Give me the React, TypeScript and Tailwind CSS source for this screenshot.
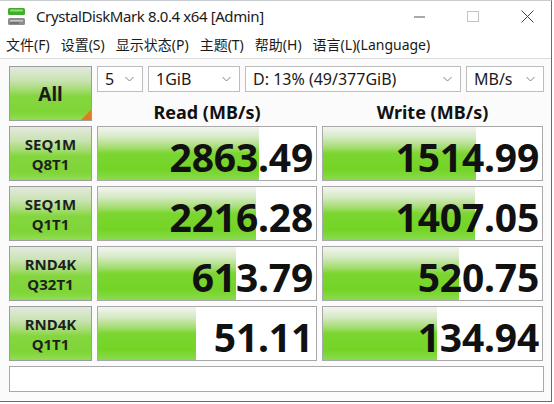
import React from "react";

const FONT = { fontFamily: '"Noto Sans", "Noto Sans CJK SC", sans-serif' };

const rows = [
  { l1: "SEQ1M", l2: "Q8T1", r: "2863.49", w: "1514.99", rb: 161, wb: 153 },
  { l1: "SEQ1M", l2: "Q1T1", r: "2216.28", w: "1407.05", rb: 158, wb: 152 },
  { l1: "RND4K", l2: "Q32T1", r: "613.79", w: "520.75", rb: 138, wb: 136 },
  { l1: "RND4K", l2: "Q1T1", r: "51.11", w: "134.94", rb: 98, wb: 114 },
];

function Chevron() {
  return (
    <svg width="9" height="6" viewBox="0 0 9 6" className="shrink-0">
      <path d="M0.5 1 L4.5 5 L8.5 1" fill="none" stroke="#808080" strokeWidth="1" />
    </svg>
  );
}

function Select({ w, text }: { w: string; text: string }) {
  return (
    <div className={`${w} h-[26px] bg-white border border-[#bdbdbd] flex items-center justify-between pl-[7px] pr-[8px] text-[16px] text-[#1a1a1a] leading-none`}>
      <span>{text}</span>
      <Chevron />
    </div>
  );
}

function Result({ value, bar }: { value: string; bar: number }) {
  return (
    <div className="relative flex-1 h-full bg-white border border-[#a8a8a8] flex items-center justify-end pr-[3px] pt-[5px] overflow-hidden">
      <div
        className="absolute left-0 top-0 bottom-0 bg-[linear-gradient(to_bottom,#f2f4f0_0%,#d8ebc8_18%,#a6dd74_38%,#7bd630_50%,#74d426_80%,#8adb4e_100%)]"
        style={{ width: bar }}
      />
      <span className="relative text-[39px] font-bold text-[#111] leading-none tracking-[-0.2px]">{value}</span>
    </div>
  );
}

export default function App() {
  return (
    <div className="w-[554px] h-[404px] bg-white overflow-hidden" style={FONT}>
      <div className="w-[552px] h-[402px] border-r border-b border-t border-[#5f6f78] border-t-[#c8ccd0] bg-white flex flex-col">
        {/* Title bar */}
        <div className="h-[31px] flex items-center shrink-0">
          <div className="w-[36px] pl-[8px] flex items-center">
            <svg width="18" height="18" viewBox="0 0 18 18">
              <rect x="0" y="0" width="17" height="7" rx="1.5" fill="#3fae2a" />
              <rect x="2" y="1.5" width="13" height="2" rx="1" fill="#8ee07a" />
              <rect x="0" y="10" width="17" height="7" rx="1.5" fill="#8c8c8c" />
              <rect x="2" y="12" width="13" height="1.5" fill="#c9c9c9" />
              <rect x="2" y="14.5" width="9" height="1" fill="#5a5a5a" />
            </svg>
          </div>
          <span className="text-[15px] text-[#1a1a1a] leading-none tracking-[-0.4px]">CrystalDiskMark 8.0.4 x64 [Admin]</span>
          <div className="flex-1" />
          <div className="flex items-center gap-[42px] pr-[17px]">
            <svg width="11" height="2" viewBox="0 0 11 2"><rect x="0" y="0.5" width="11" height="1" fill="#555" /></svg>
            <svg width="12" height="11" viewBox="0 0 12 11"><rect x="0.5" y="0.5" width="11" height="10" fill="none" stroke="#c4c4c4" /></svg>
            <svg width="13" height="13" viewBox="0 0 13 13"><path d="M0.5 0.5 L12.5 12.5 M12.5 0.5 L0.5 12.5" stroke="#444" strokeWidth="1" /></svg>
          </div>
        </div>
        {/* Menu bar */}
        <div className="h-[27px] shrink-0 flex items-center gap-[11px] pl-[6px] text-[14px] text-[#1a1a1a] border-b border-[#dcdcdc] leading-none">
          <span>文件(F)</span>
          <span>设置(S)</span>
          <span>显示状态(P)</span>
          <span>主题(T)</span>
          <span>帮助(H)</span>
          <span>语言(L)(Language)</span>
        </div>
        {/* Content */}
        <div className="flex-1 bg-[#fbfbfb] pl-[9px] pt-[7px] flex flex-col gap-[5px]">
          <div className="h-[55px] flex gap-[5px] shrink-0">
            <div className="relative w-[83px] h-full border border-[#9c9c9c] bg-[linear-gradient(to_bottom,#e2e9dd_0%,#c9e3b2_25%,#a0da6c_45%,#84d63e_55%,#7fd538_85%,#92dc56_100%)] flex items-center justify-center pt-[2px]">
              <span className="text-[19px] font-bold text-[#1a1a1a] leading-none">All</span>
              <svg className="absolute right-0 bottom-0" width="10" height="10" viewBox="0 0 10 10">
                <polygon points="10,0 10,10 0,10" fill="#e9781c" />
              </svg>
            </div>
            <div className="flex flex-col">
              <div className="flex gap-[5px] shrink-0">
                <Select w="w-[46px]" text="5" />
                <Select w="w-[92px]" text="1GiB" />
                <Select w="w-[216px]" text="D: 13% (49/377GiB)" />
                <Select w="w-[78px]" text="MB/s" />
              </div>
              <div className="flex gap-[5px] pt-[10px]">
                <div className="w-[220px] text-center text-[18px] font-bold text-[#111] leading-[20px]">Read (MB/s)</div>
                <div className="w-[221px] text-center text-[18px] font-bold text-[#111] leading-[20px]">Write (MB/s)</div>
              </div>
            </div>
          </div>
          {rows.map((r, i) => (
            <div key={i} className="h-[55px] flex gap-[5px] shrink-0">
              <div className="w-[83px] h-full border border-[#9c9c9c] bg-[linear-gradient(to_bottom,#e2e9dd_0%,#c9e3b2_25%,#a0da6c_45%,#84d63e_55%,#7fd538_85%,#92dc56_100%)] flex flex-col items-center justify-center text-[15px] font-bold text-[#1f1f1f] leading-[20px]">
                <span>{r.l1}</span>
                <span>{r.l2}</span>
              </div>
              <div className="w-[220px] h-full flex">
                <Result value={r.r} bar={r.rb} />
              </div>
              <div className="w-[221px] h-full flex">
                <Result value={r.w} bar={r.wb} />
              </div>
            </div>
          ))}
          <div className="h-[26px] w-[535px] bg-white border border-[#a8a8a8] shrink-0" />
        </div>
      </div>
    </div>
  );
}
